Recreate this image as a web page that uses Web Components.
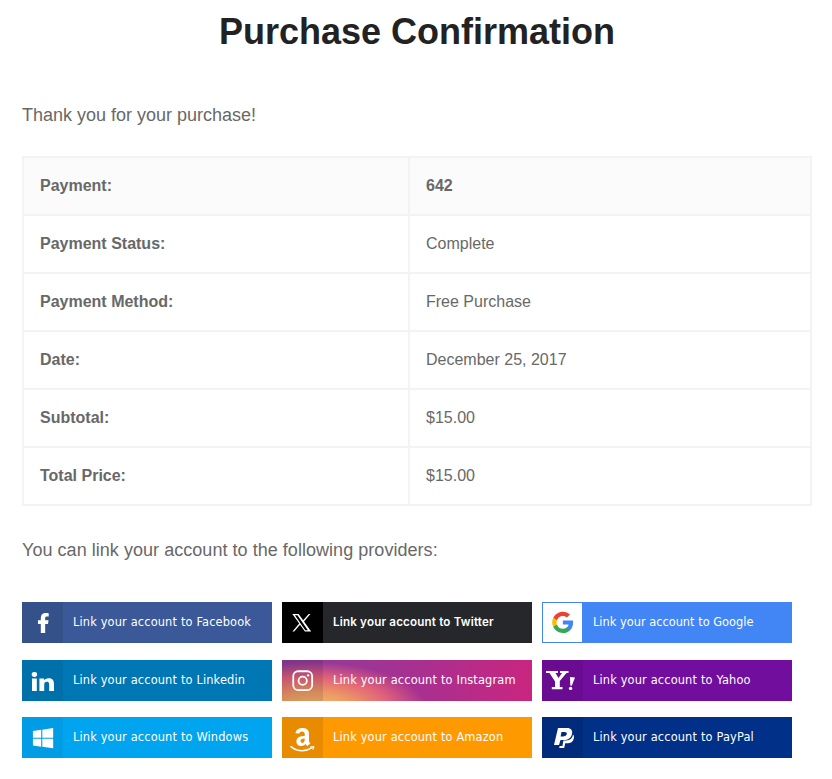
<!DOCTYPE html>
<html>
<head>
<meta charset="utf-8">
<title>Purchase Confirmation</title>
<style>
  body { margin: 0; background: #fff; font-family: "Liberation Sans", Arial, sans-serif; }
</style>
</head>
<body>
<purchase-page>
  <span slot="title">Purchase Confirmation</span>
  <span slot="thanks">Thank you for your purchase!</span>
  <purchase-table slot="table">
    <purchase-row label="Payment:" value="642" strong shaded></purchase-row>
    <purchase-row label="Payment Status:" value="Complete"></purchase-row>
    <purchase-row label="Payment Method:" value="Free Purchase"></purchase-row>
    <purchase-row label="Date:" value="December 25, 2017"></purchase-row>
    <purchase-row label="Subtotal:" value="$15.00"></purchase-row>
    <purchase-row label="Total Price:" value="$15.00"></purchase-row>
  </purchase-table>
  <span slot="providers">You can link your account to the following providers:</span>
  <link-button slot="buttons" provider="facebook">Link your account to Facebook</link-button>
  <link-button slot="buttons" provider="twitter">Link your account to Twitter</link-button>
  <link-button slot="buttons" provider="google">Link your account to Google</link-button>
  <link-button slot="buttons" provider="linkedin">Link your account to Linkedin</link-button>
  <link-button slot="buttons" provider="instagram">Link your account to Instagram</link-button>
  <link-button slot="buttons" provider="yahoo">Link your account to Yahoo</link-button>
  <link-button slot="buttons" provider="windows">Link your account to Windows</link-button>
  <link-button slot="buttons" provider="amazon">Link your account to Amazon</link-button>
  <link-button slot="buttons" provider="paypal">Link your account to PayPal</link-button>
</purchase-page>
<script>
class PurchasePage extends HTMLElement {
  constructor() {
    super();
    this.attachShadow({ mode: 'open' });
    this.shadowRoot.innerHTML = `
      <style>
        :host { display: block; padding: 0 20px 0 22px; color: #686868; }
        h1 { margin: 0; padding-top: 11px; font-size: 36px; line-height: 42px; font-weight: 700; color: #222; text-align: center; }
        p { margin: 0; font-size: 18px; line-height: 26px; }
        .thanks { margin-top: 49px; }
        .table { margin-top: 28px; }
        .providers { margin-top: 31px; letter-spacing: .04px; }
        .buttons { margin-top: 39px; display: grid; grid-template-columns: repeat(3, 250px); column-gap: 10px; row-gap: 16.5px; }
      </style>
      <h1><slot name="title"></slot></h1>
      <p class="thanks"><slot name="thanks"></slot></p>
      <div class="table"><slot name="table"></slot></div>
      <p class="providers"><slot name="providers"></slot></p>
      <div class="buttons"><slot name="buttons"></slot></div>
    `;
  }
}

class PurchaseTable extends HTMLElement {
  constructor() {
    super();
    this.attachShadow({ mode: 'open' });
    this.shadowRoot.innerHTML = `
      <style>
        :host { display: block; border: 2px solid #f3f3f3; border-bottom-width: 0; }
      </style>
      <slot></slot>
    `;
  }
}

class PurchaseRow extends HTMLElement {
  constructor() {
    super();
    this.attachShadow({ mode: 'open' });
    this.shadowRoot.innerHTML = `
      <style>
        :host { display: grid; grid-template-columns: 386px 1fr; height: 56px; border-bottom: 2px solid #f3f3f3; font-size: 16px; }
        :host([shaded]) { background: #fbfbfb; }
        div { display: flex; align-items: center; padding-left: 16px; }
        .label { font-weight: 700; border-right: 2px solid #f3f3f3; }
        :host([strong]) .value { font-weight: 700; }
      </style>
      <div class="label"></div>
      <div class="value"></div>
    `;
  }

  connectedCallback() {
    this.shadowRoot.querySelector('.label').textContent = this.getAttribute('label');
    this.shadowRoot.querySelector('.value').textContent = this.getAttribute('value');
  }
}

// icons are drawn in the 41x41 box of the panel
const PROVIDERS = {
  facebook: { bar: '#3b5998', panel: 'rgba(0,0,0,.09)',
    icon: `<path fill="#fff" transform="translate(9.500 9.200) scale(.95)" d="M14.400 23v-9.600h3l.5-3.800h-3.500V7.400c0-1.100.3-1.800 1.800-1.800h1.900V2.100C17.100 2 16 1.900 14.800 1.900c-2.900 0-5 1.700-5 4.900v2.800H6.800v3.800h3V23z"/>` },
  twitter: { bar: '#25272a', panel: '#000', font: 'Inter, "DejaVu Sans", sans-serif', weight: 600, size: '11.6px', spacing: '.18px',
    icon: `<path fill="#fff" fill-rule="evenodd" transform="translate(9.400 9.700) scale(.92)" d="M1 2.500h6.800l5 6.900 6-6.900h1.900l-7 8.100 7.800 10.900h-6.800l-5.300-7.400-6.400 7.400H1.100l7.400-8.600zM3.800 3.900l11.300 16.200h2.800L6.600 3.900z"/>` },
  google: { bar: '#4285f4', panel: '#fff', edge: '#4285f4', spacing: '0',
    icon: `<g transform="translate(9.700 9.200) scale(.93)"><path fill="#4285f4" d="M23 12.300c0-.8-.1-1.600-.2-2.300H12v4.400h6.200c-.3 1.400-1.100 2.600-2.300 3.400v2.800h3.700c2.100-2 3.400-4.900 3.400-8.300z"/>
      <path fill="#34a853" d="M12 23.500c3.100 0 5.700-1 7.600-2.800l-3.700-2.900c-1 .7-2.300 1.100-3.900 1.100-3 0-5.500-2-6.400-4.700H1.800v2.900c1.900 3.800 5.800 6.400 10.200 6.400z"/>
      <path fill="#fbbc05" d="M5.600 14.200c-.2-.7-.4-1.400-.4-2.200s.1-1.500.4-2.200V6.900H1.800C1 8.400.500 10.200.500 12s.5 3.600 1.300 5.100z"/>
      <path fill="#ea4335" d="M12 5.100c1.700 0 3.200.6 4.400 1.700l3.300-3.300C17.700 1.700 15.100.500 12 .500 7.600.500 3.700 3.100 1.800 6.900l3.800 2.900C6.500 7.100 9 5.100 12 5.100z"/></g>` },
  linkedin: { bar: '#0077b5', panel: 'rgba(0,0,0,.06)',
    icon: `<path fill="#fff" transform="translate(9 11.300) scale(1 .9)" d="M1 8h4.800v14H1zM3.400.8a2.700 2.700 0 1 1 0 5.400 2.700 2.700 0 0 1 0-5.400zM8.400 8H13v2c.7-1.300 2.300-2.400 4.500-2.400 4.600 0 5.500 3 5.500 7V22h-4.800v-6.500c0-1.700 0-3.800-2.300-3.800s-2.700 1.800-2.700 3.700V22H8.400z"/>` },
  instagram: { bar: 'radial-gradient(ellipse 125px 52px at 30px 50px, #f5c074 0%, #ee9a64 34%, #e0607a 64%, transparent 92%), linear-gradient(90deg, #8e3d9c 0%, #a83090 55%, #c9267e 100%)', panel: 'rgba(0,0,0,.1)',
    icon: `<g transform="translate(9.900 9.900) scale(.9)" fill="none" stroke="#fff" stroke-width="2"><rect x="1.500" y="1.500" width="21" height="21" rx="5.500"/>
      <circle cx="12" cy="12" r="4.600"/><circle cx="18" cy="6" r="1.300" fill="#fff" stroke="none"/></g>` },
  yahoo: { bar: '#720e9e', panel: 'rgba(0,0,0,.08)',
    icon: `<path fill="#fff" d="M4 11H16V13H13.500L16.500 18L20 13H18V11H26.500V13H24.500L17.800 21V27H20.500V29.300H9.800V27H13V21.500L7.500 13H4Z"/>
      <path fill="#fff" d="M28 17L33 17.500L29.800 25.800L28.300 25.500Z"/><circle cx="28.600" cy="28.400" r="1.700" fill="#fff"/>` },
  windows: { bar: '#00a4ef', panel: 'rgba(0,0,0,.04)',
    icon: `<path fill="#fff" transform="translate(10 10.200) scale(.92)" d="M1 4.200l9-1.300v8.600H1zM11.200 2.700L23 1v10.500H11.200zM1 12.600h9v8.600l-9-1.300zM11.200 12.600H23V23l-11.800-1.700z"/>` },
  amazon: { bar: '#f90', panel: 'rgba(0,0,0,.09)',
    icon: `<g transform="translate(8 10) scale(1.05)"><path fill="#fff" d="M14 8.500c-3.800.1-7.900 1-7.900 5.200 0 2.800 1.800 4.300 4.200 4.300 2 0 3.200-.6 4.400-1.900.6.800.8 1.200 1.800 2l2.900-2.400c-.9-.8-1.300-1.500-1.300-2.800V6.700c0-2.600-1-5.700-6.200-5.700-4.300 0-6.200 2.400-6.700 4.900l3.700.4c.3-1.300 1.200-2 2.500-2 1.900 0 2.600 1 2.600 2.200zm0 3.300c0 1.700-.8 3.300-2.300 3.300-1.100 0-1.700-.8-1.700-1.700 0-1.800 1.900-2.400 4-2.400z"/>
      <path fill="none" stroke="#fff" stroke-width="1.500" stroke-linecap="round" d="M1 18.600c3 2.600 7 4 10.700 4 3.200 0 6.500-1 9.200-2.900"/>
      <path fill="#fff" d="M19.200 18.500l3.800-.5c.4.100.2 2.500-1.100 3.800l-.6-.3.600-2.300-2.700.1z"/></g>` },
  paypal: { bar: '#003087', panel: 'rgba(0,0,0,.09)',
    icon: `<path fill="#fff" fill-rule="evenodd" d="M16 11H25c4 0 5.900 2.500 5 6-1 4-4 6-8 6H18.500L17 28H12zM19.500 15L18.600 19.500H21c2 0 3.500-1 3.800-2.500.3-1.300-.6-2-2.300-2z"/>
      <path fill="#fff" d="M31 17.500c1 1 1.200 2.500.8 4-.8 3.300-3.200 4.800-6.300 4.800h-2.300l-1 4.700h-5l.4-2h2.800l1-5.600h3c3.500 0 6-1.900 6.600-5.900z"/>` }
};

class LinkButton extends HTMLElement {
  constructor() {
    super();
    this.attachShadow({ mode: 'open' });
    this.shadowRoot.innerHTML = `
      <style>
        :host { display: flex; height: 41px; color: #fff; font-family: "DejaVu Sans", Verdana, sans-serif; font-size: 11.4px; letter-spacing: .15px; cursor: pointer; }
        .icon { box-sizing: border-box; flex: 0 0 41px; }
        svg { display: block; width: 41px; height: 41px; }
        .text { padding-left: 10px; line-height: 41px; white-space: nowrap; }
      </style>
      <span class="icon"></span>
      <span class="text"><slot></slot></span>
    `;
  }

  connectedCallback() {
    const p = PROVIDERS[this.getAttribute('provider')];
    this.style.background = p.bar;
    if (p.font) this.style.fontFamily = p.font;
    if (p.weight) this.style.fontWeight = p.weight;
    if (p.size) this.style.fontSize = p.size;
    if (p.spacing) this.style.letterSpacing = p.spacing;
    const icon = this.shadowRoot.querySelector('.icon');
    icon.style.background = p.panel;
    if (p.edge) icon.style.border = `1px solid ${p.edge}`;
    icon.innerHTML = `<svg viewBox="0 0 41 41" style="margin:${p.edge ? '-1px' : '0'}">${p.icon}</svg>`;
  }
}

customElements.define('purchase-page', PurchasePage);
customElements.define('purchase-table', PurchaseTable);
customElements.define('purchase-row', PurchaseRow);
customElements.define('link-button', LinkButton);
</script>
</body>
</html>
